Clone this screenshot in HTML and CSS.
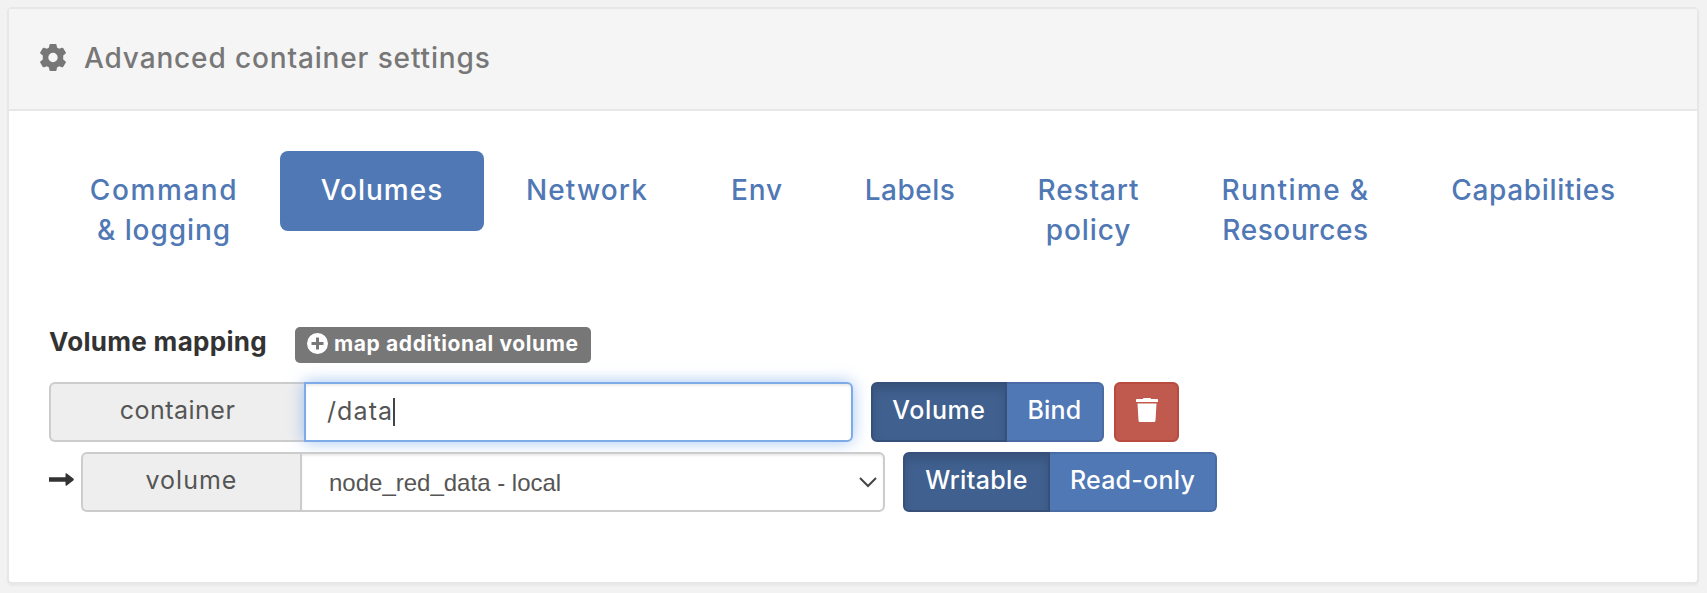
FILE: index.html
```html
<!DOCTYPE html>
<html lang="en">
<head>
<meta charset="utf-8">
<title>Advanced container settings</title>
<link rel="stylesheet" href="styles.css">
</head>
<body>
<section class="widget">
  <header class="widget-header">
    <svg class="icon-gear" viewBox="0 0 26 27"><path fill-rule="evenodd" d="M9.400 1Q9.500 0 10.500 0h5Q16.500 0 16.600 1l.4 2.600 2.200 1.200 2.600-1q1-.4 1.500.5l2.400 3.900q.5.900-.3 1.500L23.200 11.500v4l2.200 1.800q.8.600.3 1.500l-2.400 3.900q-.5.900-1.500.5l-2.600-1-2.200 1.200-.4 2.600q-.1 1-1.100 1h-5q-1 0-1.100-1L9 23.400l-2.200-1.200-2.600 1q-1 .4-1.500-.5L.3 18.800q-.5-.9.300-1.500l2.200-1.800v-4L.6 9.700Q-.2 9.100.3 8.200l2.400-3.900q.5-.9 1.500-.5l2.600 1L9 3.600zM13 8.800a4.700 4.700 0 1 0 0 9.400 4.700 4.700 0 0 0 0-9.400z"/></svg>
    <h1 class="title">Advanced container settings</h1>
  </header>
  <div class="widget-body">
    <nav class="tabs">
      <a class="tab"><span class="wider">Command</span><br>&amp; logging</a>
      <a class="tab tab-active">Volumes</a>
      <a class="tab">Network</a>
      <a class="tab">Env</a>
      <a class="tab">Labels</a>
      <a class="tab">Restart<br>policy</a>
      <a class="tab"><span class="wide">Runtime &amp;</span><br>Resources</a>
      <a class="tab">Capabilities</a>
    </nav>
    <div class="mapping-head">
      <span class="mapping-label">Volume mapping</span>
      <span class="badge">
        <svg class="icon-plus" viewBox="0 0 21 21"><path fill-rule="evenodd" d="M10.500 0a10.500 10.500 0 1 0 0 21 10.500 10.500 0 0 0 0-21zM9 4.500h3V9h4.500v3H12v4.500H9V12H4.500V9H9z"/></svg>
        <span class="badge-text">map additional volume</span>
      </span>
    </div>
    <div class="row">
      <div class="input-group group-container">
        <span class="addon">container</span>
        <div class="field field-focus"><span class="field-text">/data</span><i class="caret"></i></div>
      </div>
      <div class="btn-group">
        <span class="btn btn-on w-volume">Volume</span>
        <span class="btn btn-off w-bind">Bind</span>
      </div>
      <span class="btn btn-danger"><svg class="icon-trash" viewBox="0 0 22 24"><path d="M0 1.800Q0 1 .8 1H6.800L7.600 0h6.800l.8 1h6q.8 0 .8.800V4H0zM1.500 5.500h19l-1 17q-.1 1.500-1.600 1.500H4.100q-1.500 0-1.600-1.500z"/></svg></span>
    </div>
    <div class="row row-target">
      <svg class="icon-arrow" viewBox="0 0 25 13"><path d="M0 4.300h16.500V1.300q0-1.800 1.300-.7l6.500 4.900q1 .9 0 1.900l-6.500 5q-1.300 1-1.300-.7V8.700H0z"/></svg>
      <div class="input-group group-volume">
        <span class="addon">volume</span>
        <div class="field field-select"><span>node_red_data - local</span>
          <svg class="icon-chevron" viewBox="0 0 18 11"><path d="M1 1l8 8 8-8"/></svg>
        </div>
      </div>
      <div class="btn-group">
        <span class="btn btn-on w-writable">Writable</span>
        <span class="btn btn-off w-readonly">Read-only</span>
      </div>
    </div>
  </div>
</section>
</body>
</html>
```
FILE: styles.css
```css
* { box-sizing: border-box; }
body { margin: 0; padding: 7px 8px 0 7px; height: 593px; background: #f2f2f2; font-family: Inter, "Liberation Sans", sans-serif; color: #555; overflow: hidden; }
svg { display: block; flex: none; }
.widget { height: 577px; background: #fff; border: 2px solid #e7e7e7; border-radius: 5px; box-shadow: 0 2px 2px rgba(0,0,0,.04); }
.widget-header { display: flex; align-items: center; height: 102px; padding: 0 0 3px 31px; background: #f5f5f5; border-bottom: 2px solid #e7e7e7; }
.icon-gear { width: 26px; height: 27px; fill: #777; margin-right: 18px; }
.title { margin: 0; font-size: 28px; line-height: 40px; font-weight: 500; letter-spacing: .86px; color: #777; }
.widget-body { padding: 40px 0 0 40px; }
.tabs { display: flex; align-items: flex-start; height: 176px; }
.tab { padding: 19px 0 21px; text-align: center; font-size: 28px; line-height: 40px; font-weight: 500; letter-spacing: .9px; color: #5078b5; border-radius: 8px; white-space: nowrap; }
.tab:nth-child(1) { width: 230px; margin-right: 1px; }
.tab:nth-child(2) { width: 204px; margin-right: 1px; letter-spacing: 1px; }
.tab:nth-child(3) { width: 204px; letter-spacing: 1.1px; }
.tab:nth-child(4) { width: 136px; }
.tab:nth-child(5) { width: 170px; letter-spacing: .5px; }
.tab:nth-child(6) { width: 187px; }
.tab:nth-child(7) { width: 227px; letter-spacing: .6px; }
.tab:nth-child(8) { width: 249px; letter-spacing: .65px; }
.wide { letter-spacing: 1.4px; }
.wider { letter-spacing: 1.6px; }
.tab-active { background: #5078b5; color: #fff; }
.mapping-head { display: flex; height: 55px; }
.mapping-label { width: 246px; font-size: 26px; line-height: 30px; font-weight: 700; letter-spacing: .32px; color: #333; white-space: nowrap; }
.badge { display: flex; width: 296px; height: 36px; padding: 6px 0 0 12px; border-radius: 5px; background: #777; color: #fff; }
.icon-plus { width: 21px; height: 21px; fill: #fff; margin-right: 6px; }
.badge-text { font-size: 21px; line-height: 21px; font-weight: 700; letter-spacing: .62px; white-space: nowrap; }
.row { display: flex; align-items: center; height: 60px; margin-bottom: 10px; }
.input-group { display: flex; height: 60px; font-size: 25px; }
.group-container { width: 804px; margin-right: 18px; }
.group-volume { width: 804px; margin: 0 18px 0 7px; }
.addon { width: 255px; flex: none; text-align: center; line-height: 53px; letter-spacing: .5px; background: #eee; border: 2px solid #ccc; border-right: 0; border-radius: 6px 0 0 6px; }
.group-volume .addon { width: 219px; letter-spacing: 1px; }
.field { flex: 1; display: flex; align-items: center; padding-left: 21px; border: 2px solid #ccc; border-radius: 0 6px 6px 0; background: #fff; box-shadow: inset 0 2px 2px rgba(0,0,0,.075); }
.field-focus { border-color: #7faae8; box-shadow: inset 0 2px 2px rgba(0,0,0,.075), 0 0 16px rgba(102,160,233,.6); position: relative; z-index: 1; }
.field-text { letter-spacing: 1.1px; padding-bottom: 3px; }
.row-target { position: relative; z-index: 2; }
.caret { width: 2px; height: 28px; background: #444; }
.field-select { padding: 1px 6px 0 27px; justify-content: space-between; font-family: "Liberation Sans", Arial, sans-serif; font-size: 24px; }
.icon-chevron { width: 18px; height: 11px; fill: none; stroke: #444; stroke-width: 2; }
.icon-arrow { width: 25px; height: 13px; fill: #333; margin-bottom: 5px; }
.btn-group { display: flex; }
.btn { height: 60px; border: 2px solid; text-align: center; font-size: 25px; line-height: 53px; font-weight: 500; color: #fff; white-space: nowrap; }
.btn-on { background: #40608f; border-color: #365079; border-radius: 6px 0 0 6px; box-shadow: inset 0 6px 10px rgba(0,0,0,.125); }
.btn-off { background: #5078b5; border-color: #486ca3; border-left: 0; border-radius: 0 6px 6px 0; }
.w-volume { width: 136px; letter-spacing: .6px; }
.w-bind { width: 97px; letter-spacing: .2px; }
.w-writable { width: 147px; letter-spacing: .35px; }
.w-readonly { width: 167px; letter-spacing: .25px; }
.btn-danger { display: flex; justify-content: center; width: 65px; margin-left: 10px; padding: 14px 0 0; background: #c05a4f; border-color: #b84a3e; border-radius: 6px; }
.icon-trash { width: 22px; height: 24px; fill: #fff; }
```
